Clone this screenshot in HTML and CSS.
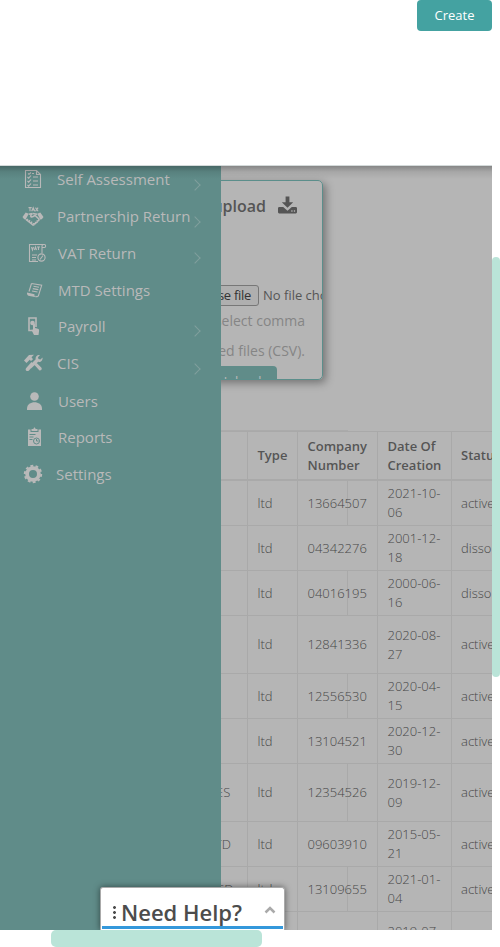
FILE: index.html
```
<!DOCTYPE html>
<html lang="en">
<head>
<meta charset="utf-8">
<title>Companies</title>
<link rel="stylesheet" href="styles.css">
</head>
<body>
<header class="top"><button class="create">Create</button></header>
<div class="stage">
<nav class="side">
<a class="item"><svg class="ic" viewBox="0 0 20 20"><path class="l" d="M2.500 1.500h11l4 4v13h-15zM13.500 1.500v4h4M10 8h5M10 12h5M10 16h5M4.500 8l1.200 1.200L8 6.500M4.500 12l1.200 1.200L8 10.500M4.500 16l1.200 1.200L8 14.500M5 4.500l1 .8L8 3.500M9 4.500h2"/></svg><span>Self Assessment</span><i class="chev"></i></a>
<a class="item"><svg class="ic wide" viewBox="0 0 22 20"><path class="l" d="M6.500 1.600h3.200M8 1.600v3.600M9.700 5.200l1.500-3.600 1.500 3.600M10.300 4h2M13.500 1.600l2.600 3.600M16.100 1.600l-2.600 3.600"/><path class="f" d="M.5 11l3.200-4.500 3.100 1.300-3.300 6-1.500-.8zM21.500 11l-3.200-4.500-3.100 1.300 3.300 6 1.500-.8z"/><path class="l w2" d="M6.800 8.300l3.700-.8c-1 .8-2.500 2.500-1.500 3.200 1.300.8 2.500-.7 4-1.200l4.500 4M11 7.500l4.200.8M4 13.500l6.500 5.200c1 .6 2 .2 1.500-.8 1.300 0 2-.4 1.700-1.400 1.300 0 2-.5 1.700-1.500 1 0 1.600-.4 1.700-1.300"/><path class="l w2" d="M5.800 13l-1 1.500M7.900 14.200l-1 1.500M10 15.600l-1 1.500"/></svg><span>Partnership Return</span><i class="chev"></i></a>
<a class="item t58"><svg class="ic vat" viewBox="0 0 20 20"><path class="l" d="M11 18.500H2.500V1.500h15c1.500 0 1.500 3 0 3H15V10M15 4.500V3c0-1 .5-1.500 1.500-1.500M4.500 4l1 3 1-3M7.500 7l1-3 1 3M10 4h3M11.500 4v3M5 12h5M5 14.500h4M5 17h4M13 16.500l3-4"/><circle class="l" cx="14.500" cy="14.500" r="3.600"/></svg><span>VAT Return</span><i class="chev"></i></a>
<a class="item t58"><svg class="ic mtd" viewBox="0 0 20 20"><path class="l" d="M6.500 3.500l10.200 1.800-3.200 10.200c-.5 1.500-2 1.500-3 .5M6.500 3.500L4 11.500M8.500 6.200l5.500 1M7.800 8.600l5.500 1M7 11l5.500 1"/><path class="f" d="M2 12.500l7.500 1.800c-.3 1.500.5 2.500 1.500 3L3.500 15.700c-1.300-.5-1.700-2-1.500-3.200z"/></svg><span>MTD Settings</span></a>
<a class="item t58 raise"><svg class="ic pay" viewBox="0 0 20 20"><path class="l w2" d="M9 14.500H5V2h7v9"/><circle class="f" cx="8.500" cy="7" r="2.300"/><path class="f" d="M9 8.500c0-1.500 2-1.500 2 0V12l3 .8c1.200.4 1.200 1.500 1 2.700L14.500 19H10l-2.500-5c.5-1 1-.5 1.500 0z"/></svg><span>Payroll</span><i class="chev"></i></a>
<a class="item"><svg class="ic" viewBox="0 0 20 20"><path class="f" d="M1 7.500L6 2l5-.3-2.500 2.500 1.500 2L8 8 6.700 6.700 3.500 10zM8.500 9l2.700 2.700-5.500 6c-1.700 1.300-4-.8-2.700-2.500zM9.500 9.500l3.200-3.200c-.6-2.500 1.500-4.800 4.300-4.300L15 4.200l.5 1.800 2 .4 2-2c.5 2.800-1.700 5-4.300 4.400L8 15.500zM11.500 12l2.200-2 4.600 4.600c1.500 1.700-.8 3.800-2.300 2.300z"/></svg><span>CIS</span><i class="chev"></i></a>
<a class="item t58 lower"><svg class="ic usr" viewBox="0 0 20 20"><circle class="f" cx="10.500" cy="5.500" r="4.300"/><path class="f" d="M3 19v-1.500c0-8.500 15-8.500 15 0V19z"/></svg><span>Users</span></a>
<a class="item t58"><svg class="ic usr" viewBox="0 0 20 20"><path class="f" fill-rule="evenodd" d="M4 2.500h2.500V5h8V2.500H17V19H4zM7.500 2h2c0-2 2-2 2 0h2v2h-6z"/><path class="cut" d="M5.500 7.500h6M5.500 10h4M5.500 12.500h3"/><circle class="cut" cx="12.500" cy="14" r="3"/><path class="cut" d="M12.500 12v2h2"/></svg><span>Reports</span></a>
<a class="item t56"><svg class="ic" viewBox="0 0 20 20"><circle class="gear" cx="10" cy="10" r="5.900"/><circle class="teeth" cx="10" cy="10" r="8.200" pathLength="100"/></svg><span>Settings</span></a>
</nav>
<main class="main">
<section class="card">
<h2><span>Bulk upload</span><svg class="dl" viewBox="0 0 20 18"><path class="f" fill-rule="evenodd" d="M8 0h4v6h4l-6 6-6-6h4zM1 11h4.500l4.500 4 4.500-4H19l1 1v5l-1 1H1l-1-1v-5zM14 14.500v1.500h1.300v-1.500zm2.700 0v1.500H18v-1.500z"/></svg></h2>
<div class="file"><button>Choose file</button><span>No file chosen</span></div>
<p><span>Please select comma</span><span>separated files (CSV).</span></p>
<button class="up">Upload</button>
</section>
<div class="rule"></div>
<table>
<colgroup><col class="c1"><col class="c2"><col class="c3"><col class="c4"><col class="c5"></colgroup>
<thead><tr><th></th><th>Type</th><th>Company Number</th><th>Date Of Creation</th><th>Status</th></tr></thead>
<tbody>
<tr><td></td><td>ltd</td><td>13664507</td><td>2021-10-<br>06</td><td>active</td></tr>
<tr><td></td><td>ltd</td><td>04342276</td><td>2001-12-<br>18</td><td>dissolved</td></tr>
<tr><td></td><td>ltd</td><td>04016195</td><td>2000-06-<br>16</td><td>dissolved</td></tr>
<tr class="tall"><td></td><td>ltd</td><td>12841336</td><td>2020-08-<br>27</td><td>active</td></tr>
<tr><td></td><td>ltd</td><td>12556530</td><td>2020-04-<br>15</td><td>active</td></tr>
<tr><td></td><td>ltd</td><td>13104521</td><td>2020-12-<br>30</td><td>active</td></tr>
<tr class="tall"><td><span class="end">ES</span></td><td>ltd</td><td>12354526</td><td>2019-12-<br>09</td><td>active</td></tr>
<tr><td><span class="end td">TD</span></td><td>ltd</td><td>09603910</td><td>2015-05-<br>21</td><td>active</td></tr>
<tr><td><span class="end ed">ED</span></td><td>ltd</td><td>13109655</td><td>2021-01-<br>04</td><td>active</td></tr>
<tr class="tall"><td></td><td></td><td></td><td>2019-07-<br>11</td><td></td></tr>
</tbody>
</table>
</main>
<div class="help"><i class="dots"></i><span>Need Help?</span><svg viewBox="0 0 12 8"><path d="M1.500 6.500L6 2l4.500 4.500"/></svg></div>
</div>
<div class="vbar"></div>
<div class="hbar"></div>
</body>
</html>
```
FILE: styles.css
```
* { box-sizing: border-box; }
body { margin: 0; width: 500px; height: 947px; overflow: hidden; position: relative; background: #fff; font-family: "Open Sans", "Noto Sans", sans-serif; }
button { font-family: inherit; }
.top { height: 166px; width: 492px; display: flex; justify-content: flex-end; align-items: flex-start; border-bottom: 1px solid #d4dada; }
.create { width: 75px; height: 31px; border: 0; border-radius: 4px; background: #44a2a1; color: #fff; font-size: 13px; padding: 0 0 2px; }
.stage { position: relative; width: 492px; height: 764px; display: grid; grid-template-columns: 221px 271px; overflow: hidden; background: #b5b5b5; }
.stage::before { content: ""; position: absolute; z-index: 3; inset: 0 0 auto; height: 13px; background: linear-gradient(rgba(0,0,0,.26), rgba(0,0,0,.08) 45%, transparent); }
.side { position: relative; z-index: 2; background: #608c89; height: 764px; color: #b9b9b9; font-size: 15px; overflow: hidden; }
.item { display: flex; align-items: center; height: 36.8px; padding-left: 23px; white-space: nowrap; }
.item:first-child { margin-top: -5px; }
.raise { padding-bottom: 2px; }
.lower { padding-top: 2px; }
.item span { margin-left: 14px; line-height: 20px; }
.t58 span { margin-left: 15px; }
.t56 span { margin-left: 13px; }
.ic { width: 20px; height: 20px; flex: none; overflow: visible; }
.wide { width: 22px; margin-right: -2px; position: relative; left: -1px; }
.vat { position: relative; left: 4px; }
.mtd { position: relative; left: 2px; }
.pay, .usr { position: relative; left: 1px; }
.l { fill: none; stroke: #b9b9b9; stroke-width: 1.1; }
.w2 { stroke-width: 1.6; }
.f { fill: #b9b9b9; }
.cut { fill: none; stroke: #608c89; stroke-width: 1; }
.gear { fill: none; stroke: #b9b9b9; stroke-width: 3.800; }
.teeth { fill: none; stroke: #b9b9b9; stroke-width: 2; stroke-dasharray: 5.500 4.500; }
.chev { width: 8px; height: 8px; border: solid #819f9d; border-width: 1px 1px 0 0; transform: rotate(45deg); margin: 11px 22px 0 auto; }
.main { height: 764px; overflow: hidden; color: #555; }
.card { width: 182px; height: 200px; margin: 14px 0 0 -80px; border: 1px solid #5b8e8b; border-radius: 5px; box-shadow: 3px 3px 8px rgba(0,0,0,.36); overflow: hidden; }
h2 { margin: 15px 25px 0 0; display: flex; justify-content: flex-end; align-items: center; height: 20px; font-size: 16px; font-weight: 600; white-space: nowrap; }
.dl { width: 19px; height: 18px; margin-left: 12px; margin-top: -3px; }
.dl .f { fill: #555; }
.file { display: flex; align-items: center; font-size: 13px; margin-top: 69px; white-space: nowrap; }
.file button { flex: none; width: 86px; height: 21px; margin-left: 31px; border: 1px solid #777; border-radius: 3px; background: #afafaf; color: #333; font-size: 13px; letter-spacing: -.3px; padding: 0 7px 1px 0; text-align: right; }
.file span { margin: -1px 0 0 4px; }
p { margin: 0 17px 0 0; font-size: 14px; line-height: 30px; color: #858585; display: flex; flex-direction: column; align-items: flex-end; white-space: nowrap; }
.up { display: block; width: 75px; height: 31px; margin-left: 60px; background: #608c89; border: 0; border-radius: 4px; color: #b9b9b9; font-size: 13px; padding: 0 0 2px; }
.rule { width: 127px; height: 2px; margin-top: 50px; background: #ababab; }
table { border-collapse: separate; border-spacing: 0; table-layout: fixed; width: 311px; margin-top: -1px; font-size: 13px; line-height: 19px; border-top: 1px solid #a9a9a9; }
.c1 { width: 27px; } .c2 { width: 50px; } .c3 { width: 80px; } .c4 { width: 74px; } .c5 { width: 80px; }
th, td { padding: 0 0 0 9.5px; text-align: left; vertical-align: middle; border-right: 1px solid #a9a9a9; border-bottom: 1px solid #a9a9a9; overflow: hidden; }
th { height: 49px; border-bottom-width: 2px; font-weight: 600; }
td { height: 45px; color: #484848; font-weight: 300; }
.tall td { height: 58px; }
th:first-child, td:first-child { padding: 0; }
th:last-child, td:last-child { padding-left: 9px; }
tbody tr:nth-child(odd) td:nth-child(3) { background: linear-gradient(#a9a9a9, #a9a9a9) 49px 0 / 1px 100% no-repeat; }
.end { display: block; margin-left: -5px; }
.td { margin-left: -6px; }
.ed { margin-left: -4px; }
.help { position: absolute; z-index: 4; left: 100px; bottom: 0; width: 185px; height: 43px; background: #fff; border: 1px solid #aaa; border-bottom: 0; border-radius: 3px 3px 0 0; box-shadow: 0 0 6px rgba(0,0,0,.5); display: flex; align-items: center; padding: 6px 8px 0 12px; font-size: 22px; font-weight: 600; color: #4c4c4c; white-space: nowrap; }
.help::after { content: ""; position: absolute; left: 1px; right: 1px; bottom: 1px; height: 3px; background: #3498db; }
.help span { margin-left: 5px; }
.dots { width: 3px; height: 15px; background: radial-gradient(circle, #4c4c4c 1.2px, transparent 1.6px) 0 0 / 3px 5px; }
.help svg { width: 12px; height: 8px; margin: -5px 0 0 auto; }
.help path { fill: none; stroke: #aaa; stroke-width: 2.500; }
.vbar { position: absolute; right: 0; top: 257px; width: 8px; height: 420px; border-radius: 5px; background: #bae4d8; }
.hbar { position: absolute; left: 51px; top: 930px; width: 211px; height: 17px; border-radius: 5px; background: #bae4d8; }
```
